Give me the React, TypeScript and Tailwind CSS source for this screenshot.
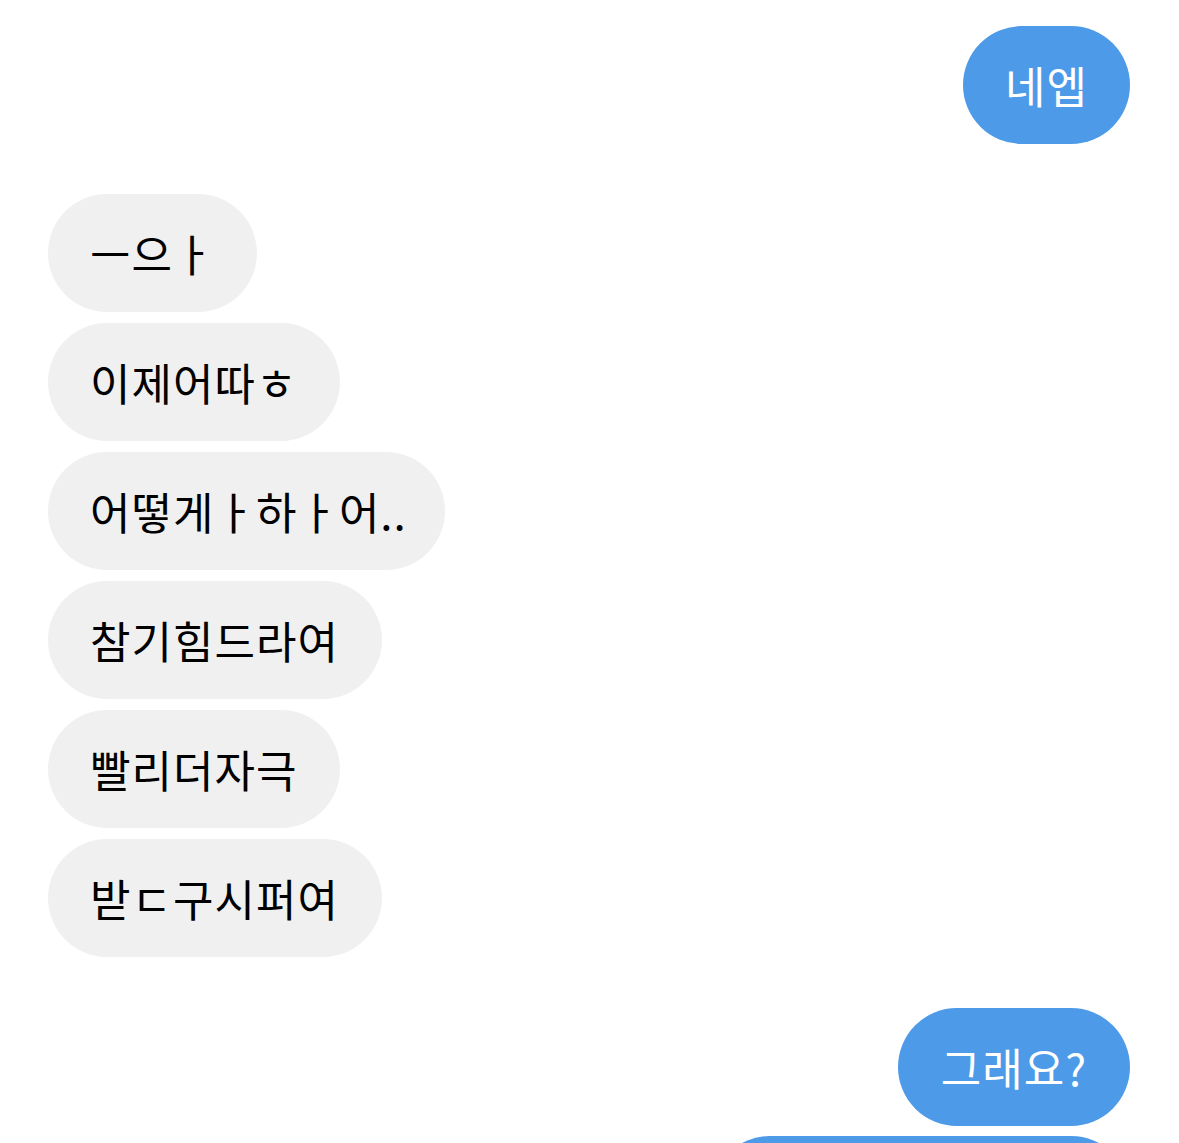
const received = [
  { text: "ㅡ으ㅏ", w: "w-[209px]" },
  { text: "이제어따ㅎ", w: "w-[292px]" },
  { text: "어떻게ㅏ하ㅏ어..", w: "w-[397px]" },
  { text: "참기힘드라여", w: "w-[334px]" },
  { text: "빨리더자극", w: "w-[292px]" },
  { text: "받ㄷ구시퍼여", w: "w-[334px]" },
];

function Sent({ children, w }: { children?: React.ReactNode; w: string }) {
  return (
    <div
      className={`${w} h-[118px] shrink-0 rounded-full bg-[#4c9ae8] text-white flex items-center justify-center text-[44px] tracking-[1px] leading-none`}
    >
      {children}
    </div>
  );
}

export default function App() {
  return (
    <div
      className="h-[1143px] overflow-hidden bg-white pt-[26px] pl-[48px] pr-[49px] flex flex-col"
      style={{ fontFamily: '"Noto Sans CJK KR", "Noto Sans", sans-serif' }}
    >
      <div className="flex justify-end">
        <Sent w="w-[167px]">네엡</Sent>
      </div>

      <div className="mt-[50px] flex flex-col gap-[11px]">
        {received.map((m) => (
          <div
            key={m.text}
            className={`${m.w} h-[118px] rounded-full bg-[#f0f0f0] text-black flex items-center pl-[42px] text-[44px] tracking-[1px] leading-none whitespace-nowrap`}
          >
            {m.text}
          </div>
        ))}
      </div>

      <div className="mt-[51px] flex flex-col items-end gap-[10px]">
        <Sent w="w-[232px]">그래요?</Sent>
        <Sent w="w-[419px]" />
      </div>
    </div>
  );
}
